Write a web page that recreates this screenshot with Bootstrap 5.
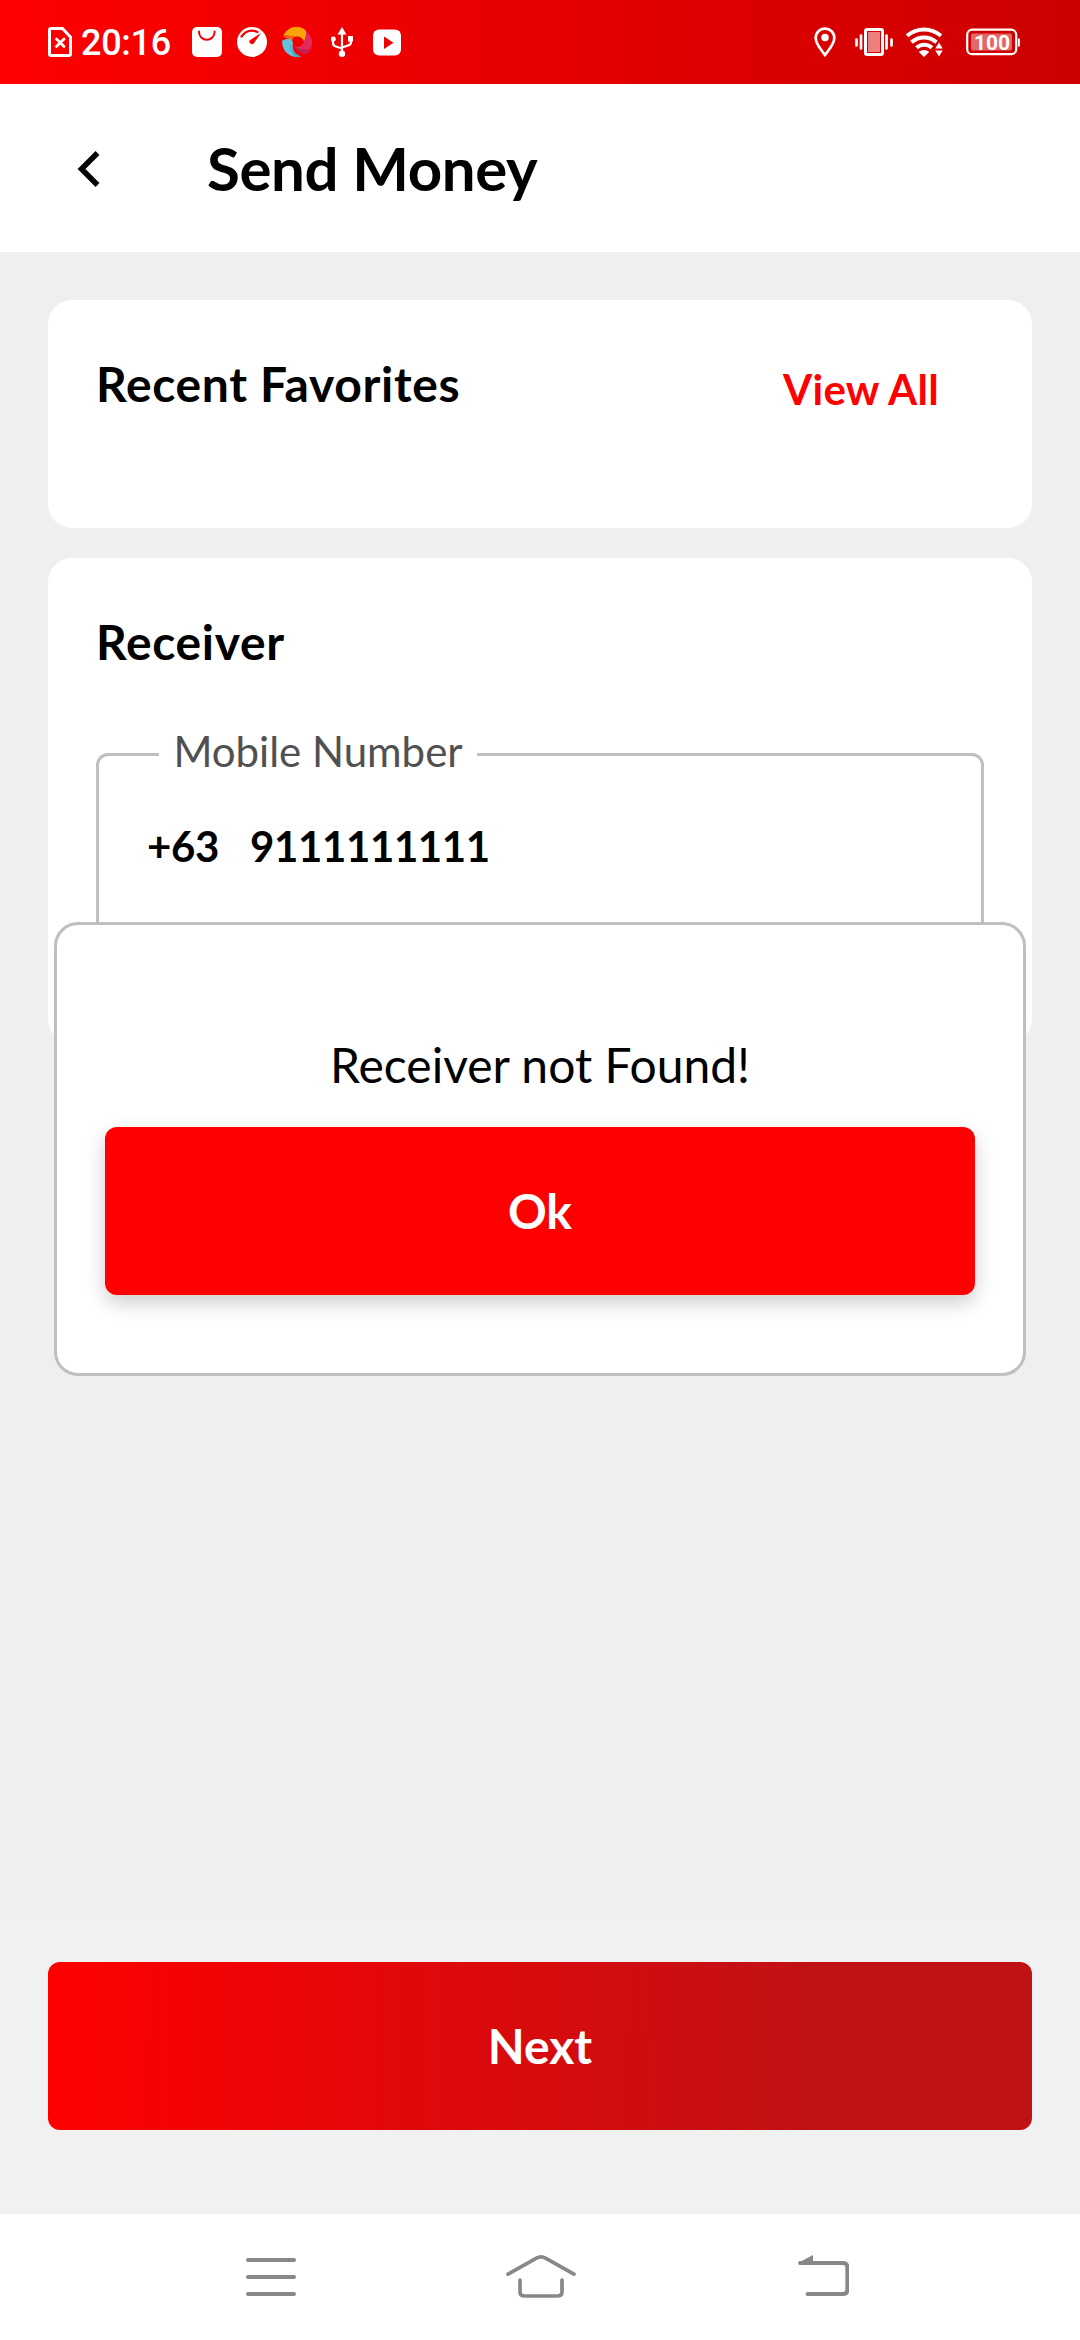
<!DOCTYPE html>
<html lang="en">
<head>
<meta charset="utf-8">
<meta name="viewport" content="width=device-width, initial-scale=1">
<title>Send Money</title>
<link href="https://cdn.jsdelivr.net/npm/bootstrap@5.3.0/dist/css/bootstrap.min.css" rel="stylesheet">
<style>
  body { width: 1080px; height: 2340px; background: #eeeff1; font-family: Lato, "Liberation Sans", sans-serif; color: #000; line-height: 1.2; overflow: hidden; }
  svg { display: block; flex: none; }
  .status-strip { height: 84px; padding: 0 60px 0 48px; background: linear-gradient(90deg, #f00, #c00); font-family: Roboto, sans-serif; color: #fff; }
  .clock { width: 111px; margin-left: 9px; padding-top: 2px; font-size: 36px; line-height: 42px; font-weight: 500; letter-spacing: -.3px; }
  .icon-gap { margin-left: 15px; }
  .icon-gap-lg { margin-left: 19px; }
  .app-head { height: 168px; padding-left: 76px; }
  .app-title { font-size: 60px; font-weight: 700; margin-left: 105px; letter-spacing: -.4px; }
  .content { padding: 48px 48px 0; gap: 30px; }
  .panel { border: 0; border-radius: 24px; padding: 55px 48px 0; }
  .panel-fav { height: 228px; }
  .panel-recv { height: 485px; }
  .panel-title { font-size: 48px; font-weight: 700; line-height: 58px; letter-spacing: .65px; }
  .view-all { font-size: 42px; font-weight: 700; line-height: 50px; letter-spacing: .3px; color: #f00; margin: 9px 45px 0 0; }
  .field { height: 189px; border: 3px solid #bfbfbf; border-radius: 12px; margin-top: 82px; padding: 65px 0 0 48px; }
  .field-label { left: 60px; top: -30px; width: 318px; font-size: 42px; line-height: 51px; color: #505050; background: #fff; }
  .field-value { font-size: 42px; font-weight: 700; line-height: 51px; letter-spacing: -.38px; }
  .prefix { width: 103px; }
  .dialog-box { left: 54px; top: 922px; width: 972px; height: 454px; border: 3px solid #bfbfbf; border-radius: 24px; padding: 111px 48px 0; }
  .dialog-text { font-size: 48px; line-height: 58px; margin-bottom: 33px; }
  .btn-big { height: 168px; border: 0; border-radius: 12px; font-size: 48px; font-weight: 700; color: #fff; }
  .btn-ok { background: #f00; box-shadow: 0 8px 20px rgba(0,0,0,.2); }
  .btn-next { background: linear-gradient(90deg, #f00 0, #c01115 78%); }
  .bottom-bar { height: 301px; background: #f1f1f1; padding: 49px 48px 0; }
  .sys-nav { height: 126px; padding-left: 246px; }
  .nav-home { margin-left: 210px; }
  .nav-back { margin-left: 222px; }
</style>
</head>
<body class="d-flex flex-column position-relative">
  <div class="status-strip d-flex align-items-center">
    <svg width="24" height="30" viewBox="48 27 24 30"><path d="M51 28.500h11.500l8 8.500v17a1.500 1.500 0 0 1-1.500 1.500H51a1.500 1.500 0 0 1-1.500-1.500V30a1.500 1.500 0 0 1 1.500-1.500z" fill="none" stroke="#fff" stroke-width="3"/><path d="M56.500 39l7.500 7.500M64 39l-7.500 7.500" stroke="#fff" stroke-width="2.800" stroke-linecap="round"/></svg>
    <div class="clock">20:16</div>
    <svg width="30" height="30" viewBox="0 0 30 30"><rect width="30" height="30" rx="5" fill="#fff"/><path d="M7 4.500v.5a7.800 7.800 0 0 0 15.600 0v-.5" fill="none" stroke="#f50000" stroke-width="2" stroke-linecap="round"/></svg>
    <svg class="icon-gap" width="30" height="30" viewBox="0 0 30 30"><circle cx="15" cy="15" r="15" fill="#fff"/><path d="M4.500 9.500C9 3.500 15 2.500 20.500 5" fill="none" stroke="#f50000" stroke-width="2.200" stroke-linecap="round"/><path d="M24 6L12.500 13.500a2.700 2.700 0 0 0 4 3.200z" fill="#f50000"/></svg>
    <svg class="icon-gap" width="30" height="30" viewBox="0 0 30 30">
      <path d="M1 9C4 3 9-.5 15 0c4 0 7 1.500 9 4 .5 4-.2 7-2 10.500-1-3.500-5-5.800-9-4.800C9 9 5 8 1 9z" fill="#fba40a"/>
      <path d="M1 10c3-1.800 8-1.500 12-.6-2 1.200-3 3-3 5.600-2-2.500-5-4.500-9-5z" fill="#f36b12"/>
      <path d="M24 4c4 3 6 7 6 11 0 6-3 10.500-7 12.500-4-2-8-4-11.500-8.500 4 2 9.500 0 10.500-4.500 2-4 2.500-7 2-10.500z" fill="#e32a5f"/>
      <path d="M11.500 19c4.500 3.500 10.500 4 16.500 3-1.500 3-3 4.500-5 5.500-4-2-8-4-11.500-8.500z" fill="#c41f53"/>
      <path d="M0 14c3-2 6-2.500 9-1.500 1 .8 1.500 2 2 3-1 4.500 0 8.500 4 12.500 1.500 1 3 1 4 1.500-2 .5-3 .5-5 .5C6 29.500 0 23 0 14z" fill="#64c3dc"/>
      <path d="M8.500 15c-.5 6 2.500 11 10.500 14.500-2 .5-3 .5-5 .5-4-3-6.500-8.500-5.500-15z" fill="#43a9c5"/>
    </svg>
    <svg class="icon-gap-lg" width="22" height="30" viewBox="331 27 22 30"><path d="M342 33v21M333 40v3c0 2 1 3 3 3.500l6 2M351 39v3c0 2-1 3-3 3.500l-6 2" fill="none" stroke="#fff" stroke-width="2.200"/><path d="M342 27l4.500 7.500h-9zM348 36h5.200v5.500H348z" fill="#fff"/><circle cx="333.300" cy="39" r="2.500" fill="#fff"/><circle cx="342" cy="53.800" r="3.200" fill="#fff"/></svg>
    <svg class="icon-gap-lg" width="29" height="27" viewBox="-1 0 29 27"><rect width="28" height="26" y=".5" rx="6" fill="#fff"/><path d="M11 7.500v12.500l9.500-6.200z" fill="#ee0000"/></svg>

    <svg class="ms-auto" width="22" height="30" viewBox="0 0 22 30"><path d="M11 1.600a9.300 9.300 0 0 0-9.300 9.300C1.700 17 7 22.500 11 28c4-5.500 9.300-11 9.300-17.100A9.300 9.300 0 0 0 11 1.600z" fill="none" stroke="#fff" stroke-width="2.700"/><circle cx="11" cy="10.500" r="3.800" fill="#fff"/></svg>
    <svg class="icon-gap-lg" width="38" height="28" viewBox="855 28 38 28"><rect x="865.500" y="29.500" width="17" height="25" rx="1.500" fill="none" stroke="#fff" stroke-width="3"/><rect x="868" y="32" width="12" height="20" fill="#ee7f7f"/><path d="M861 35.500v13M856.500 39.500v6M886.500 35.500v13M891.500 39.500v6" stroke="#fff" stroke-width="2.700" stroke-linecap="round"/></svg>
    <svg class="icon-gap" width="37" height="29" viewBox="908 28 37 29" overflow="visible"><path d="M907 35.800C917 27.500 931 27.500 941 35.800M911.500 42.300c7.500-6.500 17.500-6.500 25 0M916.500 47.800c4.500-4 11-4 15.500 0" fill="none" stroke="#fff" stroke-width="4"/><path d="M918.800 52a7.500 7.500 0 0 1 10.400 0l-5.200 5z" fill="#fff"/><path d="M939 40l7 9.500-3 9h-8l-4-9z" fill="#d40000"/><path d="M939 42.500l3.700 6h-7.400zM935.300 50.500h7.400l-3.700 6z" fill="#fff"/></svg>
    <svg class="icon-gap-lg" width="56" height="28" viewBox="964 29.500 56 28"><rect x="967.200" y="31.200" width="49" height="24.500" rx="5" fill="none" stroke="#fff" stroke-width="2.200"/><rect x="971" y="35" width="41" height="17" rx="2" fill="#e66666"/><path d="M1018.900 40v8" stroke="#fff" stroke-width="2"/><text x="992" y="51" font-size="21" font-weight="700" text-anchor="middle" fill="#fff">100</text></svg>
  </div>

  <header class="app-head bg-white d-flex align-items-center">
    <svg width="26" height="40" viewBox="76 148 26 40"><path d="M97.500 153L81.500 169l16 16" fill="none" stroke="#000" stroke-width="5.500"/></svg>
    <h1 class="app-title mb-0">Send Money</h1>
  </header>

  <main class="content flex-grow-1 d-flex flex-column">
    <section class="card panel panel-fav">
      <div class="d-flex justify-content-between align-items-start">
        <h2 class="panel-title mb-0">Recent Favorites</h2>
        <a class="view-all text-decoration-none" href="#">View All</a>
      </div>
    </section>
    <section class="card panel panel-recv">
      <h2 class="panel-title mb-0">Receiver</h2>
      <div class="field position-relative">
        <label class="field-label position-absolute text-center">Mobile Number</label>
        <div class="field-value d-flex"><span class="prefix">+63</span><span>9111111111</span></div>
      </div>
    </section>
  </main>

  <div class="bottom-bar">
    <button class="btn btn-big btn-next w-100">Next</button>
  </div>
  <nav class="sys-nav bg-white d-flex align-items-center">
    <svg width="50" height="44" viewBox="246 2255 50 44"><path d="M248 2260h46M248 2277h46M248 2294h46" stroke="#888" stroke-width="4" stroke-linecap="round"/></svg>
    <svg class="nav-home" width="70" height="44" viewBox="506 2255 70 44"><path d="M508 2274.200l28.500-16q4.500-2.500 9 0l28.500 16" fill="none" stroke="#888" stroke-width="3.700" stroke-linecap="round"/><path d="M520 2280v12q0 4 5 4h32q5 0 5-4v-12" fill="none" stroke="#888" stroke-width="3.700" stroke-linecap="round"/></svg>
    <svg class="nav-back" width="51" height="44" viewBox="798 2255 51 44"><path d="M800 2263h43q4.300 0 4.300 4v23q0 4-4.300 4h-35.500" fill="none" stroke="#888" stroke-width="3.900" stroke-linecap="round"/><path d="M798 2263l15-8v8z" fill="#888"/></svg>
  </nav>

  <div class="dialog-box position-absolute bg-white" role="dialog">
    <p class="dialog-text text-center">Receiver not Found!</p>
    <button class="btn btn-big btn-ok w-100">Ok</button>
  </div>
<script src="https://cdn.jsdelivr.net/npm/bootstrap@5.3.0/dist/js/bootstrap.bundle.min.js"></script>
</body>
</html>
